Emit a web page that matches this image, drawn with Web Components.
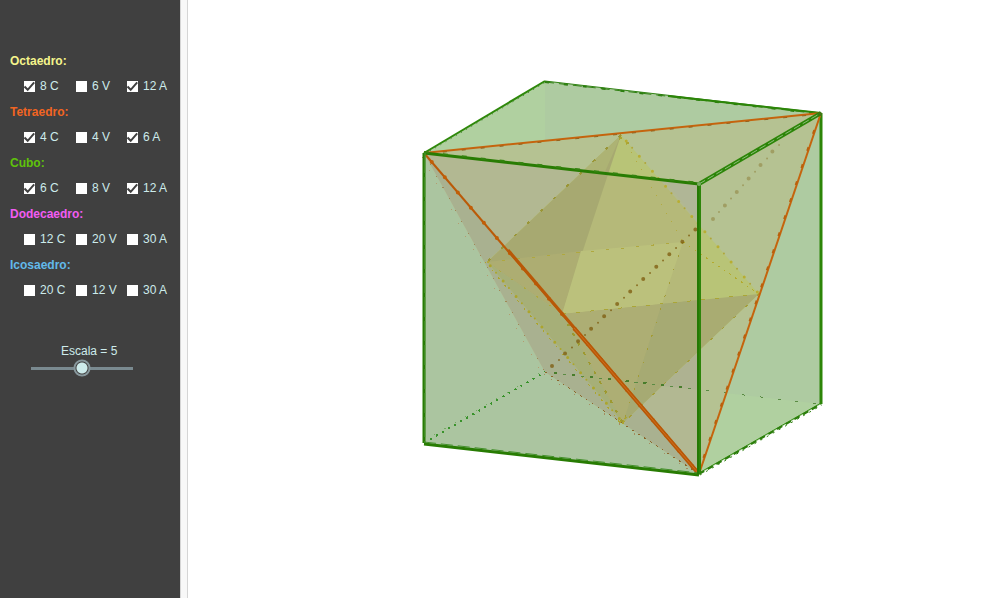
<!DOCTYPE html>
<html lang="es">
<head>
<meta charset="utf-8">
<title>Poliedros</title>
<style>
  html, body {
    height: 100%;
  }
  body {
    margin: 0;
    background: #fff;
    font-family: "Liberation Sans", Arial, sans-serif;
    font-size: 12px;
  }
</style>
</head>
<body>
<solid-app>
  <control-panel slot="panel">
    <solid-options name="Octaedro" color="#f5f58c" options="8 C*,6 V,12 A*"></solid-options>
    <solid-options name="Tetraedro" color="#f26522" options="4 C*,4 V,6 A*"></solid-options>
    <solid-options name="Cubo" color="#5fc30a" options="6 C*,8 V,12 A*"></solid-options>
    <solid-options name="Dodecaedro" color="#f25cf2" options="12 C,20 V,30 A"></solid-options>
    <solid-options name="Icosaedro" color="#62b9ea" options="20 C,12 V,30 A"></solid-options>
    <scale-slider slot="scale" value="5"></scale-slider>
  </control-panel>
  <solid-view slot="view"></solid-view>
</solid-app>

<script>
class SolidApp extends HTMLElement {
  constructor() {
    super();
    this.attachShadow({ mode: "open" });
    this.shadowRoot.innerHTML = `
      <style>
        :host {
          display: flex;
          box-sizing: border-box;
          height: 100%;
          padding-bottom: 2px;
        }
        #divider {
          flex: none;
          box-sizing: border-box;
          width: 8px;
          background: #f8f8f8;
          border: solid #d5d5d5;
          border-width: 0 1px;
        }
        main {
          display: flex;
          flex: 1;
          min-width: 0;
        }
      </style>
      <slot name="panel"></slot>
      <div id="divider"></div>
      <main><slot name="view"></slot></main>
    `;
  }
}

class ControlPanel extends HTMLElement {
  constructor() {
    super();
    this.attachShadow({ mode: "open" });
    this.shadowRoot.innerHTML = `
      <style>
        :host {
          display: flex;
          flex-direction: column;
          flex: none;
          box-sizing: border-box;
          width: 180px;
          padding: 51px 0 0 10px;
          background: #404040;
          color: #cdebeb;
        }
        #groups {
          display: flex;
          flex-direction: column;
          gap: 6px;
          margin-bottom: 44px;
        }
      </style>
      <div id="groups"><slot></slot></div>
      <slot name="scale"></slot>
    `;
  }
}

class SolidOptions extends HTMLElement {
  constructor() {
    super();
    this.attachShadow({ mode: "open" });
  }

  connectedCallback() {
    const options = this.getAttribute("options").split(",");
    this.shadowRoot.innerHTML = `
      <style>
        :host {
          display: block;
          line-height: 20px;
        }
        #title {
          font-weight: bold;
          color: ${this.getAttribute("color")};
        }
        #options {
          display: grid;
          grid-template-columns: 52px 51px auto;
          margin-top: 5px;
          padding-left: 14px;
        }
        label {
          display: flex;
          align-items: center;
          gap: 5px;
          white-space: nowrap;
        }
        input {
          appearance: none;
          flex: none;
          width: 11px;
          height: 11px;
          margin: 0;
          background: #fff;
        }
        span {
          display: grid;
        }
        span > * {
          grid-area: 1 / 1;
        }
        svg {
          display: none;
          pointer-events: none;
        }
        input:checked + svg {
          display: block;
        }
      </style>
      <div role="group" aria-labelledby="title">
        <div id="title">${this.getAttribute("name")}:</div>
        <div id="options">
          ${options.map((option) => `
            <label>
              <span>
                <input type="checkbox" ${option.endsWith("*") ? "checked" : ""}>
                <svg width="11" height="11" viewBox="0 0 11 11"><path d="M.5 5.5 3.7 8.8 10.2 1.4" fill="none" stroke="#404040" stroke-width="2"/></svg>
              </span>
              ${option.replace("*", "")}
            </label>`).join("")}
        </div>
      </div>
    `;
  }
}

class ScaleSlider extends HTMLElement {
  constructor() {
    super();
    this.attachShadow({ mode: "open" });
    this.shadowRoot.innerHTML = `
      <style>
        :host {
          display: flex;
          flex-direction: column;
          width: 102px;
          margin-left: 21px;
        }
        label {
          padding-left: 30px;
          line-height: 14px;
          white-space: nowrap;
        }
        input {
          appearance: none;
          width: 100%;
          height: 18px;
          margin: 1px 0 0;
          background: linear-gradient(#7a8a90, #7a8a90) center / 100% 3px no-repeat;
        }
        input::-webkit-slider-thumb {
          appearance: none;
          box-sizing: border-box;
          width: 18px;
          height: 18px;
          border-radius: 50%;
          background: radial-gradient(circle, #cdebeb 5px, #404040 6px, #87979c 7px, #87979c 8px, transparent 9px);
        }
      </style>
      <label for="scale"></label>
      <input id="scale" type="range" min="0" max="10">
    `;
    this.input = this.shadowRoot.querySelector("input");
    this.input.addEventListener("input", this._update.bind(this));
  }

  connectedCallback() {
    this.input.value = this.getAttribute("value");
    this._update();
  }

  _update() {
    this.shadowRoot.querySelector("label").textContent = `Escala = ${this.input.value}`;
  }
}

// Projected vertices. Cube a-d is the top face, e-h the bottom one.
const POINTS = {
  a: [236, 153], b: [511, 184], c: [633, 113], d: [357, 81],
  e: [236, 443], f: [511, 474], g: [633, 404], h: [357, 372],
  // octahedron: top, left, right, bottom, front, back
  t: [433, 135], l: [299, 262], r: [571, 294], u: [435, 423], n: [374, 314], k: [495, 242],
};

class SolidView extends HTMLElement {
  constructor() {
    super();
    this.attachShadow({ mode: "open" });
    this.shadowRoot.innerHTML = `
      <style>
        :host {
          display: flex;
          flex: 1;
          min-width: 0;
        }
        svg {
          width: 100%;
          height: 100%;
        }
      </style>
      <svg viewBox="0 0 812 598" role="img" aria-label="Cubo, tetraedro y octaedro">
        <defs>
          <clipPath id="tetra"><polygon points="${this._points("acfh")}"/></clipPath>
          <clipPath id="octa"><polygon points="${this._points("trul")}"/></clipPath>
        </defs>
        ${this._cubeFaces()}
        ${this._tetraFaces()}
        ${this._octaFaces()}
        ${this._hiddenEdges()}
        ${this._edges()}
      </svg>
    `;
  }

  _points(names) {
    return [...names].map((name) => POINTS[name].join()).join(" ");
  }

  _face(names, fill) {
    return `<polygon points="${this._points(names)}" fill="${fill}"/>`;
  }

  _edge(names, color, width, dash = "", dx = 0, dy = 0) {
    const [[x1, y1], [x2, y2]] = [...names].map((name) => POINTS[name]);
    return `<line x1="${x1 + dx}" y1="${y1 + dy}" x2="${x2 + dx}" y2="${y2 + dy}" stroke="${color}" stroke-width="${width}" stroke-dasharray="${dash}"/>`;
  }

  _dots(names, color, width, step, shift = 0) {
    const [[x1, y1], [x2, y2]] = [...names].map((name) => POINTS[name]);
    return `<line x1="${x1}" y1="${y1}" x2="${x2}" y2="${y2}" stroke="${color}" stroke-width="${width}" stroke-linecap="round" stroke-dasharray="0 ${step}" stroke-dashoffset="${-shift}"/>`;
  }

  _cubeFaces() {
    return this._face("adcgfe", "#aecba1")
      + `<polygon points="236,153 357,81 357,167" fill="#b0d0a0"/>`
      + this._face("abfe", "#abc5a0")
      + `<polygon points="511,390 633,404 511,474" fill="#b0d0a0"/>`;
  }

  _tetraFaces() {
    return this._face("acfh", "#b5c292")
      + `<g clip-path="url(#tetra)">${this._face("abfe", "#b2b892")}${this._face("afh", "#a9b190")}</g>`
      + `<polygon points="511,223 511,184 478,181" fill="#b0b696"/>`
      + `<polygon points="511,350 511,390 466,385" fill="#aeb291"/>`
      + `<polygon points="435,423 466,393 425,379" fill="#b0b694"/>`;
  }

  _octaFaces() {
    return this._face("trul", "#b8c477")
      + `<g clip-path="url(#octa)">
          ${this._face("abfe", "#b5b979")}
          ${this._face("tln", "#a7a971")}
          <polygon points="299,262 393,251 374,314" fill="#adad72"/>
          <polygon points="433,135 416,174 387,171" fill="#adb374"/>
          ${this._face("nru", "#a9ac72")}
          <polygon points="393,251 495,242 474,304 374,314" fill="#bbc17c"/>
          <polygon points="374,314 474,304 435,423" fill="#adae74"/>
          <polygon points="474,304 511,300 511,351 435,423" fill="#a6aa73"/>
          <polygon points="299,262 374,314 435,423" fill="#a6af78"/>
          <polygon points="299,262 315,283 385,368 435,423" fill="#a3ad7a"/>
        </g>`;
  }

  _hiddenEdges() {
    return `<g shape-rendering="crispEdges" fill="none">`
      + this._edge("tl", "#9a9637", 2, "3 15")
      + this._edge("lu", "#aca52c", 1, "2 8", -2)
      + this._edge("nu", "#9d9930", 2, "3 8")
      + this._edge("tk", "#b3aa42", 1, "1 9")
      + this._edge("kr", "#b3aa2e", 1, "2 5")
      + this._edge("lk", "#afa83f", 1, "3 12")
      + this._edge("ln", "#afa83f", 1, "2 13")
      + this._edge("nr", "#aaa637", 1, "4 10")
      + this._edge("ru", "#a49e3a", 1, "3 13")
      + this._edge("ku", "#a39c35", 1, "2 12")
      + `<path d="M431 139l4-2M438 142l3 2M430 421l5 2 3-6" stroke="#aba432" stroke-width="2" stroke-dasharray="3 2"/>`
      + this._edge("ah", "#9f8857", 1, "1 12")
      + this._edge("ah", "#b49c70", 1, "1 14", -2, 4)
      + this._edge("hf", "#8c672c", 1, "2 5")
      + this._edge("hf", "#a58b60", 1, "1 8", -1, 2)
      + this._edge("eh", "#39932b", 2, "2 5")
      + this._edge("eh", "#74aa61", 1, "1 11", 0, -2)
      + `<line x1="366" y1="373" x2="511" y2="389" stroke="#487d2b" stroke-width="2" stroke-dasharray="3 15"/>`
      + `<line x1="375" y1="374" x2="633" y2="404" stroke="#5a8b43" stroke-width="1" stroke-dasharray="3 15"/>`
      + `</g>`
      + this._dots("tr", "#b8ae32", 3, 20, 8)
      + this._dots("tr", "#b0a63a", 2, 20, 17)
      + this._dots("lu", "#aca52c", 3, 20, 5)
      + this._dots("lu", "#aca52c", 2, 20, 14)
      + `<g opacity=".75">`
      + `<line x1="364" y1="366" x2="511" y2="226" stroke="#7d5a0c" stroke-width="4" stroke-linecap="round" stroke-dasharray="0 18"/>`
      + `<line x1="371" y1="360" x2="511" y2="226" stroke="#7d5a0c" stroke-width="2" stroke-linecap="round" stroke-dasharray="0 18"/>`
      + `</g>`
      + `<g opacity=".5">`
      + `<line x1="525" y1="219" x2="590" y2="145" stroke="#8d7c35" stroke-width="4" stroke-linecap="round" stroke-dasharray="0 18"/>`
      + `<line x1="531" y1="212" x2="600" y2="135" stroke="#8d7c35" stroke-width="2" stroke-linecap="round" stroke-dasharray="0 18"/>`
      + `</g>`;
  }

  _edges() {
    return `<g>`
      + this._edge("dc", "#328315", 1)
      + this._edge("dc", "#287b0b", 2, "4 15", 0, 1)
      + this._edge("dc", "#328315", 1, "9 5", 0, 1)
      + `<line x1="480" y1="96" x2="633" y2="113" stroke="#2c8508" stroke-width="2"/>`
      + this._edge("ad", "#2e880a", 2)
      + this._edge("ad", "#3b7d26", 1, "1 5", 1, 1)
      + this._edge("fg", "#379015", 1, "", 0, -1)
      + this._edge("fg", "#2b7d0b", 2, "6 4", 0, 0)
      + this._edge("fg", "#2b7d0b", 1, "2 5", 1, 1)
      + this._edge("cg", "#2c8508", 3)
      + this._edge("ac", "#c5640d", 2)
      + this._edge("ac", "#96601b", 1, "4 15", 0, 1)
      + this._edge("cf", "#c5640d", 2)
      + this._edge("cf", "#ba600c", 2, "4 14", -1)
      + this._edge("af", "#ba5a08", 2)
      + this._dots("af", "#c15e07", 4, 20, 12)
      + `<line x1="320" y1="250" x2="511" y2="474" stroke="#b85807" stroke-width="3"/>`
      + `<line x1="386" y1="328" x2="511" y2="474" stroke="#b85807" stroke-width="4"/>`
      + `<line x1="386" y1="328" x2="511" y2="474" stroke="#cf6e1d" stroke-width="1"/>`
      + this._edge("bc", "#2c8508", 4)
      + this._edge("bc", "#8dbd79", 1, "7 3")
      + this._edge("ab", "#287c03", 3)
      + this._edge("ab", "#34830f", 2, "5 14", 0, -1)
      + this._edge("ae", "#287c05", 3)
      + this._edge("ae", "#55993b", 1, "20 4", 1)
      + this._edge("ef", "#287c03", 3, "", 0, 1)
      + this._edge("ef", "#43902b", 1, "12 5", 0, -1)
      + this._edge("bf", "#257904", 4)
      + this._edge("bf", "#369110", 1, "", 1)
      + `<circle cx="511" cy="184" r="2" fill="#79aa62"/>`
      + `<circle cx="632" cy="114" r="2" fill="#3e7613"/>`
      + `</g>`;
  }
}

customElements.define("solid-app", SolidApp);
customElements.define("control-panel", ControlPanel);
customElements.define("solid-options", SolidOptions);
customElements.define("scale-slider", ScaleSlider);
customElements.define("solid-view", SolidView);
</script>
</body>
</html>
